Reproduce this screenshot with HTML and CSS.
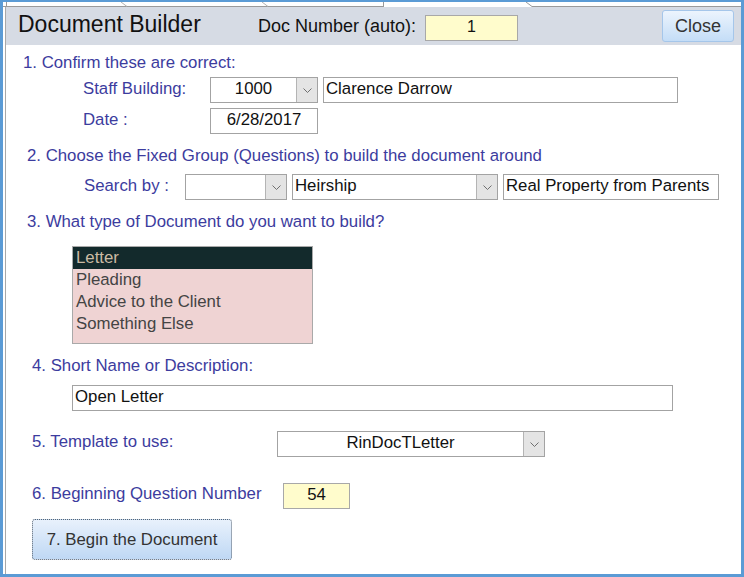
FILE: index.html
```html
<!DOCTYPE html>
<html>
<head>
<meta charset="utf-8">
<link rel="stylesheet" href="styles.css">
</head>
<body>
<div class="window">
  <svg class="tabs" width="738" height="5" viewBox="0 0 738 5">
    <line x1="0" y1="4.5" x2="381" y2="4.5" stroke="#9a9a9a" stroke-width="1"/>
    <line x1="3.5" y1="0" x2="3.5" y2="5" stroke="#9a9a9a" stroke-width="1"/>
    <line x1="118" y1="0" x2="124" y2="4.5" stroke="#b0b0b0" stroke-width="1"/>
    <line x1="259" y1="0" x2="265" y2="4.5" stroke="#b0b0b0" stroke-width="1"/>
    <line x1="380.5" y1="0" x2="380.5" y2="5" stroke="#9a9a9a" stroke-width="1"/>
    <line x1="523" y1="0" x2="529" y2="4.5" stroke="#9a9a9a" stroke-width="1"/>
    <line x1="529" y1="4.5" x2="738" y2="4.5" stroke="#9a9a9a" stroke-width="1"/>
  </svg>
  <div class="panel">
    <div class="header">
      <div class="title">Document Builder</div>
      <div class="docnum-label">Doc Number (auto):</div>
      <div class="field yellow docnum">1</div>
      <div class="close-btn">Close</div>
    </div>
    <div class="content">
      <div class="section s1">1. Confirm these are correct:</div>
      <div class="row staff-row">
        <div class="label w-staff">Staff Building:</div>
        <div class="field select w-sel1000"><span class="sel-text center">1000</span><span class="dd"><svg width="9" height="5" viewBox="0 0 9 5"><polyline points="0.5,0.5 4.5,4.5 8.5,0.5" fill="none" stroke="#6f6f6f" stroke-width="1"/></svg></span></div>
        <div class="field w-name">Clarence Darrow</div>
      </div>
      <div class="row date-row">
        <div class="label w-staff">Date :</div>
        <div class="field center w-date">6/28/2017</div>
      </div>
      <div class="section s2">2. Choose the Fixed Group (Questions) to build the document around</div>
      <div class="row search-row">
        <div class="label w-search">Search by :</div>
        <div class="field select w-sel-a"><span class="sel-text"></span><span class="dd"><svg width="9" height="5" viewBox="0 0 9 5"><polyline points="0.5,0.5 4.5,4.5 8.5,0.5" fill="none" stroke="#6f6f6f" stroke-width="1"/></svg></span></div>
        <div class="field select w-sel-b"><span class="sel-text">Heirship</span><span class="dd"><svg width="9" height="5" viewBox="0 0 9 5"><polyline points="0.5,0.5 4.5,4.5 8.5,0.5" fill="none" stroke="#6f6f6f" stroke-width="1"/></svg></span></div>
        <div class="field w-prop">Real Property from Parents</div>
      </div>
      <div class="section s3">3. What type of Document do you want to build?</div>
      <div class="listbox">
        <div class="opt selected">Letter</div>
        <div class="opt">Pleading</div>
        <div class="opt">Advice to the Client</div>
        <div class="opt">Something Else</div>
      </div>
      <div class="section s4">4. Short Name or Description:</div>
      <div class="field w-short">Open Letter</div>
      <div class="row tpl-row">
        <div class="label w-tpl">5. Template to use:</div>
        <div class="field select w-sel-tpl"><span class="sel-text center">RinDocTLetter</span><span class="dd"><svg width="9" height="5" viewBox="0 0 9 5"><polyline points="0.5,0.5 4.5,4.5 8.5,0.5" fill="none" stroke="#6f6f6f" stroke-width="1"/></svg></span></div>
      </div>
      <div class="row q-row">
        <div class="label w-q">6. Beginning Question Number</div>
        <div class="field yellow center w-qnum">54</div>
      </div>
      <div class="begin-btn">7. Begin the Document</div>
    </div>
  </div>
</div>
</body>
</html>
```

FILE: styles.css
```css
body {
  margin: 0;
  font-family: "Liberation Sans", Arial, sans-serif;
  background: #fff;
}

.window {
  width: 744px;
  height: 577px;
  box-sizing: border-box;
  border: 3px solid #5b9bd5;
  border-top-width: 2px;
  background: #fff;
  display: flex;
  flex-direction: column;
}

.tabs {
  display: block;
  flex: none;
}

.panel {
  flex: 1;
  margin-left: 2px;
  border-left: 1px solid #a8a8a8;
  display: flex;
  flex-direction: column;
}

/* header */
.header {
  height: 38px;
  flex: none;
  background: #d6dbe4;
  display: flex;
  align-items: flex-start;
  padding-left: 12px;
}

.title {
  width: 240px;
  margin-top: 4px;
  font-size: 23px;
  line-height: 26px;
  color: #111;
}

.docnum-label {
  margin-top: 9px;
  font-size: 18px;
  line-height: 20px;
  color: #111;
  margin-right: 9px;
}

.docnum {
  width: 93px;
  height: 27px;
  margin-top: 8px;
  text-align: center;
  line-height: 23px;
}

.close-btn {
  margin-left: auto;
  margin-right: 7px;
  margin-top: 3px;
  width: 72px;
  height: 32px;
  box-sizing: border-box;
  border: 1px solid #a5c6ea;
  border-radius: 3px;
  background: linear-gradient(#ecf4fd, #c4ddf7);
  color: #333;
  font-size: 18px;
  display: flex;
  align-items: center;
  justify-content: center;
}

/* content */
.content {
  display: flex;
  flex-direction: column;
  align-items: flex-start;
  font-size: 16.8px;
}

.section,
.label {
  color: #3c3c9e;
  font-size: 16.8px;
  line-height: 20px;
  padding-top: 2px;
  white-space: nowrap;
}

.row {
  display: flex;
  align-items: flex-start;
}

.field {
  height: 26px;
  box-sizing: border-box;
  border: 1px solid #a3a3a3;
  background: #fff;
  color: #111;
  line-height: 21px;
  padding: 0 2px;
  white-space: nowrap;
  overflow: hidden;
}

.field.center,
.sel-text.center {
  text-align: center;
}

.yellow {
  background: #fffccc;
  border-color: #a8a8a8;
}

.select {
  display: flex;
  padding: 0;
}

.sel-text {
  flex: 1;
  padding: 0 2px;
}

.dd {
  width: 20px;
  flex: none;
  background: #e4e4e4;
  border-left: 1px solid #b4b4b4;
  display: flex;
  align-items: center;
  justify-content: center;
}

.dd svg {
  display: block;
}

/* section 1 */
.s1 {
  margin-top: 6px;
  margin-left: 17px;
}

.staff-row {
  margin-top: 4px;
  margin-left: 77px;
}

.w-staff {
  width: 127px;
}

.w-sel1000 {
  width: 108px;
  margin-right: 5px;
}

.w-name {
  width: 355px;
}

.date-row {
  margin-top: 5px;
  margin-left: 77px;
}

.w-date {
  width: 108px;
}

/* section 2 */
.s2 {
  margin-top: 10px;
  margin-left: 21px;
}

.search-row {
  margin-top: 8px;
  margin-left: 78px;
}

.w-search {
  width: 101px;
}

.w-sel-a {
  width: 102px;
  margin-right: 5px;
}

.w-sel-b {
  width: 206px;
  margin-right: 5px;
}

.w-prop {
  width: 216px;
}

/* section 3 */
.s3 {
  margin-top: 10px;
  margin-left: 21px;
}

.listbox {
  margin-top: 14px;
  margin-left: 66px;
  width: 241px;
  height: 98px;
  box-sizing: border-box;
  border: 1px solid #a9a9a9;
  background: #efd3d3;
  color: #444;
}

.opt {
  height: 22px;
  line-height: 22px;
  padding-left: 3px;
}

.opt.selected {
  background: #132a2c;
  color: #cbbba4;
}

/* section 4 */
.s4 {
  margin-top: 10px;
  margin-left: 26px;
}

.w-short {
  margin-top: 9px;
  margin-left: 66px;
  width: 601px;
}

/* section 5 */
.tpl-row {
  margin-top: 20px;
  margin-left: 26px;
}

.w-tpl {
  width: 245px;
  margin-top: -1px;
}

.w-sel-tpl {
  width: 268px;
}

/* section 6 */
.q-row {
  margin-top: 26px;
  margin-left: 26px;
}

.w-q {
  width: 251px;
  margin-top: -1px;
}

.w-qnum {
  width: 67px;
}

/* begin button */
.begin-btn {
  margin-top: 10px;
  margin-left: 26px;
  width: 200px;
  height: 41px;
  box-sizing: border-box;
  border: 1px dotted #5a6470;
  border-radius: 3px;
  background: linear-gradient(#e8f1fc, #bfd8f4);
  color: #333;
  font-size: 16.8px;
  display: flex;
  align-items: center;
  justify-content: center;
}
```
